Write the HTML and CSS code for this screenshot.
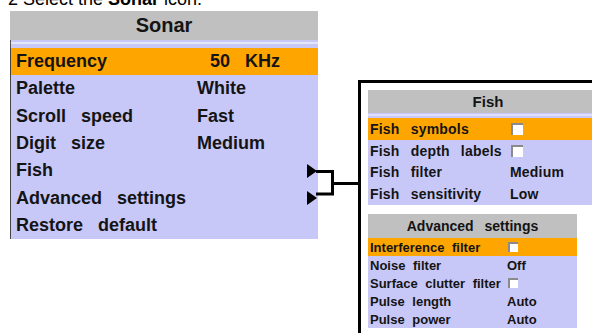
FILE: index.html
```html
<!DOCTYPE html>
<html>
<head>
<meta charset="utf-8">
<link rel="stylesheet" href="styles.css">
</head>
<body>
<div class="page">
  <div class="caption">2 Select the <b>Sonar</b> icon.</div>
  <div class="stage">
    <div class="menu">
      <div class="menu-head">Sonar</div>
      <div class="menu-strip"><span></span></div>
      <div class="menu-body">
        <div class="row sel"><span class="lbl">Frequency</span><span class="val val-freq">50 KHz</span></div>
        <div class="row"><span class="lbl">Palette</span><span class="val">White</span></div>
        <div class="row"><span class="lbl">Scroll speed</span><span class="val">Fast</span></div>
        <div class="row"><span class="lbl">Digit size</span><span class="val">Medium</span></div>
        <div class="row"><span class="lbl">Fish</span><span class="arrow"></span></div>
        <div class="row"><span class="lbl">Advanced settings</span><span class="arrow"></span></div>
        <div class="row"><span class="lbl">Restore default</span></div>
      </div>
    </div>
    <div class="frame">
      <div class="sub fish">
        <div class="sub-head">Fish</div>
        <div class="sub-strip"><span></span></div>
        <div class="srow sel"><span class="slbl">Fish symbols</span><span class="chk"></span></div>
        <div class="srow"><span class="slbl">Fish depth labels</span><span class="chk"></span></div>
        <div class="srow"><span class="slbl">Fish filter</span><span class="sval">Medium</span></div>
        <div class="srow"><span class="slbl">Fish sensitivity</span><span class="sval">Low</span></div>
      </div>
      <div class="sub adv">
        <div class="sub-head">Advanced settings</div>
        <div class="arow sel"><span class="albl">Interference filter</span><span class="chk small"></span></div>
        <div class="arow"><span class="albl">Noise filter</span><span class="aval">Off</span></div>
        <div class="arow"><span class="albl">Surface clutter filter</span><span class="chk small"></span></div>
        <div class="arow"><span class="albl">Pulse length</span><span class="aval">Auto</span></div>
        <div class="arow"><span class="albl">Pulse power</span><span class="aval">Auto</span></div>
      </div>
    </div>
  </div>
  <svg class="connector" width="46" height="40" viewBox="316 160 46 40">
    <path d="M316 171.5 H332.5 V194 H316 M332.5 183.5 H360" fill="none" stroke="#000" stroke-width="3"/>
  </svg>
</div>
</body>
</html>
```

FILE: styles.css
```css
html, body {
  margin: 0;
  padding: 0;
  background: #fff;
}
body {
  width: 592px;
  height: 333px;
  overflow: hidden;
}
.page {
  position: relative;
  width: 592px;
  height: 333px;
  overflow: hidden;
  font-family: "Liberation Sans", Arial, sans-serif;
  color: #141414;
}
.caption {
  margin-top: -10px;
  padding-left: 8px;
  height: 18px;
  font-size: 18px;
  line-height: 18px;
  color: #000;
  white-space: nowrap;
}
.stage {
  display: flex;
  align-items: flex-start;
}
.menu {
  margin-left: 10px;
  margin-top: 3px;
  width: 308px;
  flex: none;
}
.menu-head {
  height: 29px;
  background: #c0c0c0;
  text-align: center;
  font-size: 20px;
  font-weight: bold;
  line-height: 29px;
}
.menu-strip {
  height: 8px;
  background: #c8c8f6;
  border-left: 1px solid #555;
  padding-top: 2px;
  box-sizing: border-box;
}
.menu-strip span {
  display: block;
  height: 2px;
  background: #e6e6fb;
}
.menu-body {
  background: #c8c8f8;
  border-left: 1px solid #444;
}
.row {
  height: 27.3px;
  display: flex;
  align-items: center;
  padding-left: 5px;
  font-size: 18px;
  font-weight: bold;
  word-spacing: 10px;
  white-space: nowrap;
}
.row.sel,
.srow.sel,
.arow.sel {
  background: #ffa500;
}
.lbl {
  width: 181px;
  flex: none;
}
.val-freq {
  padding-left: 13px;
}
.arrow {
  margin-left: auto;
  margin-right: 1px;
  width: 0;
  height: 0;
  border-left: 10px solid #000;
  border-top: 7.5px solid transparent;
  border-bottom: 7.5px solid transparent;
}
.frame {
  flex: none;
  margin-left: 40px;
  margin-top: 72px;
  width: 234px;
  height: 270px;
  box-sizing: border-box;
  border-top: 3px solid #000;
  border-left: 3px solid #000;
  padding: 7px 0 0 7px;
  overflow: hidden;
  display: flex;
  flex-direction: column;
  gap: 9px;
}
.sub {
  background: #c8c8f8;
  flex: none;
}
.fish {
  width: 240px;
}
.adv {
  width: 209px;
}
.sub-head {
  background: #c0c0c0;
  text-align: center;
  font-weight: bold;
  white-space: nowrap;
}
.fish .sub-head {
  height: 23px;
  line-height: 23px;
  font-size: 15px;
}
.adv .sub-head {
  height: 24px;
  line-height: 24px;
  font-size: 14px;
  word-spacing: 7px;
}
.sub-strip {
  height: 5px;
  padding-top: 1px;
  box-sizing: border-box;
}
.sub-strip span {
  display: block;
  height: 2px;
  background: #dedefa;
}
.srow {
  height: 21.75px;
  display: flex;
  align-items: center;
  padding-left: 2px;
  font-size: 14px;
  font-weight: bold;
  word-spacing: 7px;
  letter-spacing: 0.2px;
  white-space: nowrap;
}
.slbl {
  width: 140px;
  flex: none;
}
.arow {
  height: 18px;
  display: flex;
  align-items: center;
  padding-left: 2px;
  font-size: 13px;
  font-weight: bold;
  word-spacing: 4px;
  white-space: nowrap;
}
.albl {
  width: 137px;
  flex: none;
}
.aval {
  padding-left: 0;
}
.chk {
  display: block;
  width: 12px;
  height: 12px;
  box-sizing: border-box;
  background: #fff;
  border-top: 2px solid #8a8a8a;
  border-left: 2px solid #8a8a8a;
  margin-left: 1px;
}
.chk.small {
  width: 10px;
  height: 10px;
  margin-left: 1px;
}
.connector {
  position: absolute;
  left: 316px;
  top: 160px;
}
```
